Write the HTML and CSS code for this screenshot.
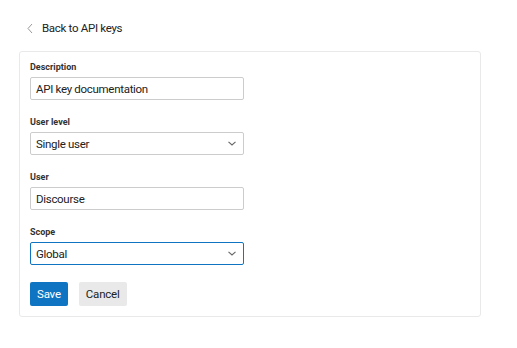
FILE: index.html
```html
<!DOCTYPE html>
<html lang="en">
<head>
  <meta charset="UTF-8">
  <meta name="viewport" content="width=device-width, initial-scale=1.0">
  <title>API key</title>
  <link rel="stylesheet" href="styles.css">
</head>
<body>
  <a class="back-link" href="#">
    <svg class="back-icon" width="6" height="11" viewBox="0 0 6 11"><path d="M5 1 L1 5.5 L5 10" fill="none" stroke="#999" stroke-width="1"/></svg>
    Back to API keys
  </a>

  <div class="card">
    <div class="field">
      <label for="desc">Description</label>
      <input type="text" id="desc" class="control" value="API key documentation">
    </div>

    <div class="field">
      <label>User level</label>
      <div class="control select">
        <span>Single user</span>
        <svg width="8" height="5" viewBox="0 0 8 5"><path d="M0.5 0.8 L4 4 L7.5 0.8" fill="none" stroke="#666" stroke-width="1.1"/></svg>
      </div>
    </div>

    <div class="field">
      <label for="user">User</label>
      <input type="text" id="user" class="control" value="Discourse">
    </div>

    <div class="field">
      <label>Scope</label>
      <div class="control select focused">
        <span>Global</span>
        <svg width="8" height="5" viewBox="0 0 8 5"><path d="M0.5 0.8 L4 4 L7.5 0.8" fill="none" stroke="#666" stroke-width="1.1"/></svg>
      </div>
    </div>

    <div class="actions">
      <button class="btn btn-primary">Save</button>
      <button class="btn">Cancel</button>
    </div>
  </div>
</body>
</html>
```

FILE: styles.css
```css
body { margin: 0; padding: 19px 36px 0 19px; font-family: Roboto, "Liberation Sans", sans-serif; color: #222; background: #fff; }
.back-link { display: flex; align-items: center; gap: 9px; margin-left: 8px; height: 18px; font-size: 11.5px; letter-spacing: -0.3px; color: #222; text-decoration: none; }
.card { margin-top: 14px; border: 1px solid #e9e9e9; border-radius: 3px; padding: 10px; }
.field { margin-bottom: 17px; }
.field label { display: block; font-size: 9px; line-height: 11px; font-weight: bold; color: #333; margin-bottom: 4px; }
.control { box-sizing: border-box; display: block; width: 214px; height: 23px; border: 1px solid #ccc; border-radius: 2px; padding: 0 5px; font-family: inherit; font-size: 11.5px; letter-spacing: -0.3px; color: #222; background: #fff; margin: 0; }
.select { display: flex; align-items: center; justify-content: space-between; padding-right: 7px; }
.select.focused { border-color: #0f75c2; }
.actions { display: flex; gap: 11px; }
.btn { height: 24px; padding: 0 7px; border: none; border-radius: 2px; background: #e9e9e9; color: #222; font-family: inherit; font-size: 11.5px; letter-spacing: -0.2px; }
.btn-primary { background: #0f75c2; color: #fff; }
```
